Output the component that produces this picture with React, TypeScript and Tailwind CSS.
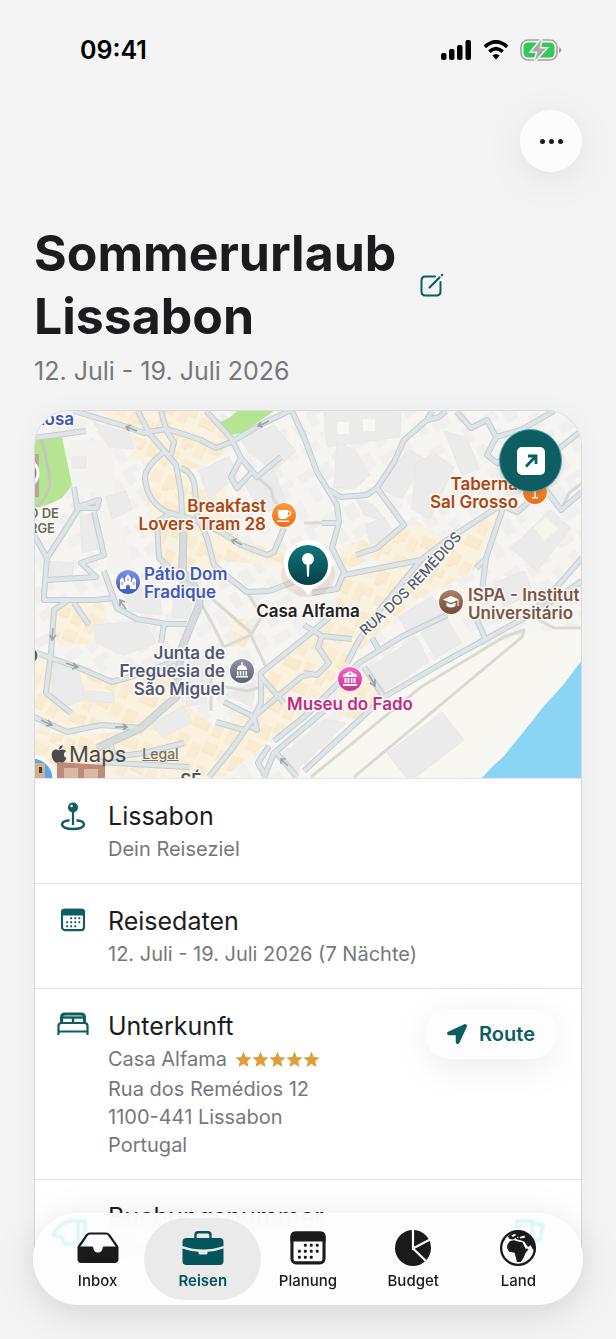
import type { ReactNode } from "react";
import { FaApple, FaLocationArrow } from "react-icons/fa";

const streets = [
  "M40 0 L90 15 L110 22 L120 20 L133 18 L152 24 L167 29 L182 37 L197 31 L230 12 L255 0",
  "M0 27 L52 20",
  "M104 0 L115 22 L128 37 L142 54 L147 81 L148 104 L150 160",
  "M127 0 L133 21 L140 31 L137 44",
  "M172 0 L197 27 L207 47 L223 66 L247 46",
  "M207 47 L197 66 L203 77 L218 61",
  "M130 41 Q112 55 111 66 Q112 90 133 101 L160 109 L187 121 L207 134 L233 144 L240 141 L250 117",
  "M147 57 Q160 62 161 78 L163 104 L173 127 L180 154 L200 171 L213 181 L235 180 L262 170",
  "M137 102 L123 111 L125 147 L150 171 L166 184",
  "M10 184 L13 147 L30 121 L45 97 L63 97 L65 89 L43 96 L40 76",
  "M60 101 L70 144 L47 152 L62 166 L12 169",
  "M0 124 L13 147",
  "M258 0 L270 26 L283 61 L303 94 L305 111 L298 137 L310 161 L303 178 L278 182",
  "M398 0 L393 9 L370 29 L360 51 L343 77 L333 84 L307 86 L295 79",
  "M393 9 L405 6 L412 0",
  "M343 77 L370 114 L343 137 L322 144",
  "M310 164 L387 149 L410 131 L467 94 L483 101 L503 84",
  "M313 252 L325 229 L345 200 L387 149",
  "M423 1 L437 17 L453 9 L462 26 L453 44 L463 52 L480 40",
  "M462 26 L487 19 L513 4 L520 0",
  "M548 19 L517 44 L500 60",
  "M503 67 L527 99 L548 81",
  "M470 94 L452 147 L448 180",
  "M453 147 L442 157",
  "M548 147 L527 171 L500 200",
  "M10 179 L10 189 L60 189 L80 187",
  "M70 160 L83 197 L103 208 L133 213 L153 213",
  "M130 213 L127 232",
  "M33 190 L20 199 L17 242 L12 282 L37 302",
  "M40 192 L55 214",
  "M0 241 L43 256 L78 271 L110 262 L140 250",
  "M0 306 L33 321 L67 314 L107 317",
  "M77 334 L80 346 L110 342 L150 332",
  "M63 350 L80 352 L155 356",
  "M175 366 L197 339 L220 306 L227 292 L227 262 L277 222 L300 202",
  "M182 311 L210 319",
  "M190 291 L220 306 L223 319 L217 316",
  "M227 266 L250 292",
  "M222 304 L267 266 L280 262",
  "M290 300 L240 342 L230 366",
  "M235 335 L224 352 L232 366",
  "M240 339 L263 366",
  "M270 360 L350 286 L410 251 L463 222 L503 200 L548 170",
  "M240 330 L270 306 L325 252 L367 226 L413 204",
  "M330 256 L350 286",
  "M338 227 L345 239",
  "M443 209 L452 229",
  "M270 214 L288 225 L318 228",
  "M288 225 L284 236 L295 252 L283 264 L270 262",
  "M288 112 L303 112",
];

const mainStreets = [
  "M150 112 L148 160 Q168 180 165 195 L157 214 L147 239 L142 286 L107 317 L63 337",
];

const footpaths = [
  "M277 366 L387 276 L470 226 L490 219 L488 226 L320 366",
  "M503 208 L520 217 L548 217",
  "M223 66 L237 78 L240 90 L250 97",
  "M548 72 L535 82 L528 97",
  "M167 192 L180 216 L190 236",
  "M176 186 L215 220 L232 256",
  "M190 236 L217 224 L228 205 L213 181",
  "M177 256 L177 300",
  "M187 275 L213 280 L227 276",
  "M270 112 L288 112",
];

const warmBlocks = [
  "M65 0 L172 0 L200 34 L180 50 L150 60 L165 78 L190 75 L205 130 L250 140 L250 155 L190 150 L160 175 L125 155 L118 110 L108 75 L112 50 L93 48 L105 32 L80 12Z",
  "M12 200 L40 190 L75 195 L60 232 L25 235Z",
  "M0 243 L43 258 L78 273 L140 262 L140 286 L107 317 L67 313 L33 321 L0 306Z",
  "M0 318 L33 324 L107 320 L150 292 L180 315 L222 300 L228 262 L300 200 L310 164 L387 149 L410 131 L467 96 L440 160 L380 190 L325 240 L315 255 L300 280 L190 366 L0 366Z",
  "M298 140 L330 128 L345 145 L310 160Z",
  "M310 262 L328 258 L348 288 L318 310 L300 300Z",
  "M195 212 L212 206 L222 226 L204 240Z",
  "M335 135 L356 120 L385 112 L410 128 L390 148 L345 156Z",
];

const greyBlocks = [
  "M60 12 L95 22 L100 38 L75 36Z",
  "M38 46 L52 46 L52 57 L38 57Z",
  "M165 60 L195 45 L203 66 L175 88Z",
  "M207 28 L240 14 L262 40 L240 60 L215 42Z",
  "M210 72 L240 60 L252 92 L228 104Z",
  "M72 86 L92 80 L98 98 L78 108Z",
  "M46 106 L58 102 L64 138 L48 142Z",
  "M16 150 L40 152 L38 166 L16 166Z",
  "M140 178 L160 182 L155 208 L138 206Z",
  "M85 172 L125 178 L128 204 L96 200Z",
  "M60 214 L110 210 L122 232 L90 244 L62 232Z",
  "M20 250 L45 262 L52 288 L30 296 L18 286Z",
  "M52 280 L80 282 L80 292 L54 290Z",
  "M118 312 L150 295 L158 312 L128 326Z",
  "M155 246 L176 250 L172 292 L152 296Z",
  "M192 284 L222 270 L218 296Z",
  "M290 1 L367 1 L366 26 L293 36Z",
  "M358 57 L375 38 L390 48 L368 88 L350 80Z",
  "M382 52 L400 42 L420 56 L396 108 L378 98Z",
  "M332 114 L350 106 L360 122 L336 134Z",
  "M303 30 L322 40 L336 64 L320 78 L300 76Z",
  "M465 60 L482 50 L500 62 L500 80 L474 84Z",
  "M477 137 L517 99 L537 117 L503 160Z",
  "M410 20 L432 26 L446 58 L428 64Z",
  "M364 206 L398 186 L410 200 L374 222Z",
  "M335 257 L383 226 L395 251 L350 280Z",
  "M387 222 L413 207 L427 232 L402 247Z",
  "M460 172 L490 160 L500 182 L470 196Z",
  "M353 342 L408 301 L430 329 L382 366 L372 366Z",
  "M248 345 L290 308 L312 312 L262 360Z",
  "M322 88 L340 94 L352 110 L330 104Z",
];

type Place = {
  lines: string[];
  x: number;
  y: number;
  anchor: "start" | "middle" | "end";
  color: string;
};

const places: Place[] = [
  { lines: ["Rosa"], x: 40, y: 14, anchor: "end", color: "#3f55b8" },
  { lines: ["Breakfast", "Lovers Tram 28"], x: 232, y: 101, anchor: "end", color: "#ae4510" },
  { lines: ["Pátio Dom", "Fradique"], x: 110, y: 169, anchor: "start", color: "#4059c0" },
  { lines: ["Casa Alfama"], x: 274, y: 206, anchor: "middle", color: "#222222" },
  { lines: ["Junta de", "Freguesia de", "São Miguel"], x: 191, y: 248, anchor: "end", color: "#505874" },
  { lines: ["Museu do Fado"], x: 316, y: 299, anchor: "middle", color: "#c02c84" },
  { lines: ["ISPA - Institut", "Universitário"], x: 434, y: 190, anchor: "start", color: "#7d5546" },
  { lines: ["Taberna", "Sal Grosso"], x: 484, y: 79, anchor: "end", color: "#ae4510" },
  { lines: ["O"], x: 4, y: 251, anchor: "end", color: "#555555" },
  { lines: ["SÉ"], x: 157, y: 375, anchor: "middle", color: "#555555" },
];

function Poi({ x, y, color, children }: { x: number; y: number; color: string; children?: ReactNode }) {
  return (
    <g transform={`translate(${x} ${y})`}>
      <circle r="13" fill="#fff" opacity="0.9" />
      <circle r="12" fill={color} />
      {children}
    </g>
  );
}

function MapView() {
  return (
    <svg
      viewBox="0 0 548 367"
      preserveAspectRatio="xMidYMid slice"
      className="block h-[367px] w-full"
      role="img"
      aria-label="Karte von Lissabon"
    >
      <defs>
        <pattern id="warm" width="58" height="46" patternUnits="userSpaceOnUse" patternTransform="rotate(24)">
          <rect width="58" height="46" fill="#faf1de" />
          <path d="M1 1 H15 V12 H1Z M32 3 H44 V15 H38 V19 H32Z M3 26 H13 V40 H3Z M40 28 H56 V38 H40Z" fill="#f9ead0" />
          <path d="M17 3 H28 V16 H17Z M18 24 H34 V33 H26 V43 H18Z M47 8 H56 V23 H47Z" fill="#faecd4" />
          <path d="M1 12 H15 M32 19 H38 V15 H44 M26 43 V33 H34 V24 M3 40 H13 M40 38 H56 V28 M56 8 V23" stroke="#ece0c8" strokeWidth="0.7" fill="none" />
        </pattern>
        <pattern id="pale" width="62" height="48" patternUnits="userSpaceOnUse" patternTransform="rotate(-32)">
          <rect width="62" height="48" fill="#f6f5f1" />
          <path d="M2 3 H18 V12 H2Z M24 6 H36 V22 H24Z M42 2 H58 V9 H50 V18 H42Z" fill="#f0efed" />
          <path d="M4 20 H14 V36 H4Z M20 30 H38 V40 H20Z M44 26 H54 V44 H44Z" fill="#f1f0ee" />
        </pattern>
        <linearGradient id="marker" x1="0" y1="0" x2="0" y2="1">
          <stop offset="0" stopColor="#0f777a" />
          <stop offset="1" stopColor="#083f45" />
        </linearGradient>
        <linearGradient id="orange" x1="0" y1="0" x2="0" y2="1">
          <stop offset="0" stopColor="#fb9d3c" />
          <stop offset="1" stopColor="#f26a16" />
        </linearGradient>
        <linearGradient id="pink" x1="0" y1="0" x2="0" y2="1">
          <stop offset="0" stopColor="#f765c8" />
          <stop offset="1" stopColor="#cf2c90" />
        </linearGradient>
        <linearGradient id="blue" x1="0" y1="0" x2="0" y2="1">
          <stop offset="0" stopColor="#7a92ea" />
          <stop offset="1" stopColor="#4058c4" />
        </linearGradient>
        <linearGradient id="slate" x1="0" y1="0" x2="0" y2="1">
          <stop offset="0" stopColor="#9095a6" />
          <stop offset="1" stopColor="#5c6178" />
        </linearGradient>
        <linearGradient id="brown" x1="0" y1="0" x2="0" y2="1">
          <stop offset="0" stopColor="#b08264" />
          <stop offset="1" stopColor="#6f4a3a" />
        </linearGradient>
        <path id="rua" d="M331 225 Q384 180 440 112" />
      </defs>

      <rect width="548" height="367" fill="url(#pale)" />
      <path d="M430 240 L495 222 L548 216 V366 H260 L350 290Z" fill="#f8f7f2" />
      <path d="M35 30 L70 30 Q84 45 80 80 L100 160 L75 165 L60 80 L38 74Z" fill="#f4f3f0" />
      {warmBlocks.map((d) => (
        <path key={d} d={d} fill="url(#warm)" />
      ))}
      {greyBlocks.map((d) => (
        <path key={d} d={d} fill="#ecebeb" stroke="#e4e3e1" strokeWidth="0.6" />
      ))}
      <rect x="303" y="11" width="12" height="12" fill="#f8f7f2" />
      <rect x="329" y="8" width="12" height="12" fill="#f8f7f2" />
      <path d="M500 116 L512 106 L524 118 L510 130Z" fill="#f6f5f0" />

      {/* Parks */}
      <path d="M0 28 L28 26 L38 74 L28 87 L18 92 L0 98Z" fill="#b5e592" />
      <path d="M203 0 L240 0 L230 7 L220 14 L213 21 L197 24 L184 12 L195 7Z" fill="#b5e592" />
      <path d="M7 28 Q14 50 16 72 Q12 92 0 96" fill="none" stroke="#c6c6bc" strokeWidth="3" />

      {/* Tejo */}
      <path d="M548 249 L530 273 L510 295 L495 314 L470 345 L457 357 L448 367 L548 367Z" fill="#8bd5f4" />

      {footpaths.map((d) => (
        <path key={d} d={d} fill="none" stroke="#d9dad4" strokeWidth="3" strokeLinejoin="round" />
      ))}
      {streets.map((d) => (
        <path key={d} d={d} fill="none" stroke="#c3cccf" strokeWidth="6" strokeLinejoin="round" />
      ))}
      {mainStreets.map((d) => (
        <path key={d} d={d} fill="none" stroke="#c6cbcc" strokeWidth="8" strokeLinejoin="round" />
      ))}
      {streets.map((d) => (
        <path key={d} d={d} fill="none" stroke="#dde5e8" strokeWidth="4" strokeLinejoin="round" />
      ))}
      {mainStreets.map((d) => (
        <path key={d} d={d} fill="none" stroke="#d6dbdd" strokeWidth="6" strokeLinejoin="round" />
      ))}

      {/* One-way arrows */}
      <g stroke="#9aa3a8" strokeWidth="1.6" fill="none">
        <path d="M103 20 L93 16 M97 14 L92 16 L95 20" />
        <path d="M235 10 L225 15 M227 11 L224 15 L229 16" />
        <path d="M208 134 L199 129 M203 128 L198 129 L200 133" />
        <path d="M32 252 L43 256 M39 252 L44 256 L38 258" />
        <path d="M81 316 L92 316 M89 313 L93 316 L89 319" />
        <path d="M7 309 L17 314 M14 309 L18 314 L12 315" />
        <path d="M92 198 L86 190 M86 195 L86 189 L91 191" />
        <path d="M18 228 L19 217 M16 224 L18 229 L22 224" />
        <path d="M335 264 L341 274 M341 268 L341 275 L336 272" />
        <path d="M254 355 L247 348 M247 353 L247 348 L252 348" />
      </g>

      {/* Landmarks */}
      <path d="M0 43 H5 V86 H0Z" fill="#b9a892" />
      <circle cx="-10" cy="62" r="14" fill="#8b8069" stroke="#fff" strokeWidth="3" />
      <path d="M23 351 L71 354 L71 367 L23 367Z" fill="#bd8a7c" />
      <path d="M30 357 h14 v10 h-14z M50 358 h14 v9 h-14z" fill="#d9b8a4" />
      <circle cx="-2" cy="368" r="22" fill="#5fa4ee" stroke="#fff" strokeWidth="3" />
      <path d="M0 352 h11 v15 h-11z" fill="#cdb48d" />
      <path d="M5 356 h3 v6 h-3z" fill="#4a4034" />

      <Poi x={250} y={104} color="url(#orange)">
        <path d="M-6 -5 H4 V0 Q4 4 0 4 H-2 Q-6 4 -6 0Z M-7 5.5 H5 V7 H-7Z" fill="#fff" />
        <path d="M4 -3.5 H6 Q7 -3 6.500 -1 Q6 1 3.500 1" fill="none" stroke="#fff" strokeWidth="1.300" />
      </Poi>
      <Poi x={94} y={171} color="url(#blue)">
        <path d="M-8 7 V-2 L-6 -5 L-4 -2 V0 H-3 V-4 L0 -8 L3 -4 V0 H4 V-2 L6 -5 L8 -2 V7 H2 V4 Q0 1 -2 4 V7Z" fill="#fff" />
        <path d="M-6 0 V3 M6 0 V3 M0 -4 V-1" stroke="#5a72d4" strokeWidth="1" />
      </Poi>
      <Poi x={208} y={260} color="url(#slate)">
        <path d="M-5 -1 Q-5 -6 0 -6 Q5 -6 5 -1Z M-0.7 -9 H0.7 V-5 H-0.7Z M-6 5 H6 V6.500 H-6Z M-5 0 H-3.500 V4.500 H-5Z M-2.200 0 H-0.7 V4.500 H-2.200Z M0.7 0 H2.200 V4.500 H0.7Z M3.500 0 H5 V4.500 H3.500Z" fill="#fff" />
      </Poi>
      <Poi x={316} y={268} color="url(#pink)">
        <path d="M0 -8 L7 -4 V-2 H-7 V-4Z M-5.500 -1 H-3.500 V4 H-5.500Z M-2.500 -1 H-0.7 V4 H-2.500Z M0.7 -1 H2.500 V4 H0.7Z M3.500 -1 H5.500 V4 H3.500Z M-7 5 H7 V7 H-7Z" fill="#fff" />
        <circle cy="-5" r="1" fill="#e44cb0" />
      </Poi>
      <Poi x={417} y={191} color="url(#brown)">
        <path d="M0 -6 L8 -2.500 L0 1 L-8 -2.500Z M-4.500 0.500 L0 2.500 L4.500 0.500 V4 Q0 7 -4.500 4Z M6.500 -2 H7.500 V4 H6.500Z" fill="#fff" />
      </Poi>
      <Poi x={501} y={81} color="url(#orange)">
        <path d="M-3 5 H3 V6.500 H-3Z M-0.8 -3 H0.8 V5 H-0.8Z" fill="#fff" />
      </Poi>

      <g
        className="[paint-order:stroke]"
        fontFamily="Inter, sans-serif"
        fontSize="17"
        fontWeight="600"
        stroke="#fbfaf6"
        strokeWidth="3"
        strokeLinejoin="round"
      >
        {places.map((place) => (
          <text key={place.lines[0]} x={place.x} y={place.y} textAnchor={place.anchor} fill={place.color}>
            {place.lines.map((line, i) => (
              <tspan key={line} x={place.x} y={place.y + i * 18}>
                {line}
              </tspan>
            ))}
          </text>
        ))}
        <g fontSize="13" fontWeight="600" fill="#6b6a62" textAnchor="end">
          <text x="25" y="107">O DE</text>
          <text x="21" y="122">ORGE</text>
        </g>
        <text fontSize="14" fontWeight="500" fill="#545c6e">
          <textPath href="#rua">RUA DOS REMÉDIOS</textPath>
        </text>
      </g>

      {/* Pin of the accommodation */}
      <g transform="translate(274 154)">
        <ellipse cy="10" rx="27" ry="22" fill="#a65c4a" opacity="0.12" />
        <path d="M0 30 L-7 22 A24 24 0 1 1 7 22Z" fill="#fff" />
        <circle r="20" fill="url(#marker)" />
        <circle cy="-6" r="6" fill="#fff" />
        <path d="M-1.500 -2 H1.500 L1 11 Q0 13 -1 11Z" fill="#fff" />
      </g>
    </svg>
  );
}

function StatusBar() {
  return (
    <div className="flex h-8 items-center justify-between pr-[54px] pl-20">
      <span className="text-[25px] leading-8 font-semibold text-black">09:41</span>
      <div className="flex items-center gap-[11px]">
        <svg width="31" height="20" viewBox="0 0 31 20" aria-hidden="true">
          <rect x="0" y="13" width="5.5" height="7" rx="2" />
          <rect x="8" y="9" width="5.5" height="11" rx="2" />
          <rect x="16" y="5" width="5.5" height="15" rx="2" />
          <rect x="24.500" y="0" width="5.5" height="20" rx="2" />
        </svg>
        <svg width="26" height="20" viewBox="0 0 26 20" aria-hidden="true">
          <path d="M1.800 6.800 Q13 -3.200 24.200 6.800" fill="none" stroke="#000" strokeWidth="3.600" />
          <path d="M6.300 11.600 Q13 5.600 19.700 11.600" fill="none" stroke="#000" strokeWidth="3.600" />
          <path d="M13 19.800 L9.400 15.600 Q13 12.400 16.600 15.600Z" />
        </svg>
        <svg width="42" height="24" viewBox="0 0 42 24" aria-hidden="true">
          <rect x="1" y="2" width="36" height="20" rx="7" fill="none" stroke="#a3a3a3" strokeWidth="1.600" />
          <rect x="3.500" y="4.500" width="31" height="15" rx="4.500" fill="#34c759" />
          <path d="M39 9 Q41.500 10 41.500 12 Q41.500 14 39 15Z" fill="#a3a3a3" />
          <path
            d="M21.500 1.500 L11.500 13.500 H17.500 L15 22.500 L26 10.500 H19.500Z"
            fill="#a9a9a9"
            stroke="#f4f4f4"
            strokeWidth="3"
            className="[paint-order:stroke]"
          />
        </svg>
      </div>
    </div>
  );
}

function PinIcon() {
  return (
    <svg width="32" height="36" viewBox="0 0 32 36" fill="none" stroke="currentColor" aria-hidden="true">
      <circle cx="16" cy="10.500" r="5" fill="currentColor" stroke="none" />
      <circle cx="14.600" cy="9" r="1.300" fill="#fff" stroke="none" />
      <path d="M16 14 V28" strokeWidth="2.200" />
      <path d="M12.500 23.200 Q5 24 5 27.500 Q5.500 31.800 16 32 Q26.500 31.800 27 27.500 Q27 24 19.500 23.200" strokeWidth="2.400" />
    </svg>
  );
}

function CalendarIcon({ size }: { size: number }) {
  return (
    <svg width={size} height={size} viewBox="0 0 32 32" aria-hidden="true">
      <rect x="2.500" y="3.500" width="27" height="25" rx="3.500" fill="none" stroke="currentColor" strokeWidth="2.600" />
      <path d="M1.200 10.500 V6.200 Q1.200 2.200 5.200 2.200 H26.800 Q30.800 2.200 30.800 6.200 V10.500Z" fill="currentColor" />
      <g fill="currentColor">
        {[12, 17, 22].map((y, row) =>
          [7.5, 12.5, 17.5, 22.5].map((x, col) =>
            (row === 0 && col === 0) || (row === 2 && col === 3) ? null : (
              <rect key={`${x}-${y}`} x={x} y={y + 0.5} width="2.500" height="2.500" rx="0.8" />
            ),
          ),
        )}
      </g>
    </svg>
  );
}

function BedIcon() {
  return (
    <svg width="32" height="32" viewBox="0 0 32 32" fill="none" stroke="currentColor" strokeWidth="2.200" aria-hidden="true">
      <path d="M4.500 14 V8.500 Q4.500 5 8 5 H24 Q27.500 5 27.500 8.500 V14" strokeWidth="3" />
      <path d="M16 8 V13.500" strokeWidth="2.400" />
      <path d="M6 8.500 H26" strokeWidth="2.400" />
      <path d="M1.500 26 V17 Q1.500 14 4.500 14 H27.500 Q30.500 14 30.500 17 V26 M1.500 22.500 H30.500" />
    </svg>
  );
}

function Stars() {
  return (
    <span className="flex" role="img" aria-label="5 Sterne">
      {[1, 2, 3, 4, 5].map((n) => (
        <svg key={n} width="17" height="17" viewBox="0 0 24 24" fill="#dc9f3c" aria-hidden="true">
          <path d="M12 0.800 L15.200 8.400 L23.500 9.100 L17.200 14.500 L19.100 22.600 L12 18.300 L4.900 22.600 L6.800 14.500 L0.500 9.100 L8.800 8.400Z" />
        </svg>
      ))}
    </span>
  );
}

function Row({ icon, title, action, children }: { icon?: ReactNode; title: string; action?: ReactNode; children: ReactNode }) {
  return (
    <section className="flex border-b border-[#e6e6e9] pt-5 pb-5 last:border-b-0">
      <div className="flex h-8 w-[73px] shrink-0 items-center justify-center pl-0.5 text-[#0d5d62]">{icon}</div>
      <div className="min-w-0 flex-1">
        <h2 className="text-[25px] leading-[34px] text-[#1c1c1e]">{title}</h2>
        <div className="mt-0.5 text-[20px] leading-7 text-[#77777b]">{children}</div>
      </div>
      {action}
    </section>
  );
}

const tabs = [
  {
    label: "Inbox",
    active: false,
    icon: (
      <svg width="42" height="38" viewBox="0 0 42 38" aria-hidden="true">
        <path d="M1.600 18 L10 6 Q11 4.500 13 4.500 H29 Q31 4.500 32 6 L40.400 18" fill="none" stroke="currentColor" strokeWidth="2.200" />
        <path d="M0.500 17.500 H15 Q16.500 17.500 16.500 19.500 Q17 23.500 21 23.500 Q25 23.500 25.500 19.500 Q25.500 17.500 27 17.500 H41.500 V30 Q41.500 34 37.500 34 H4.500 Q0.500 34 0.500 30Z" fill="currentColor" />
      </svg>
    ),
  },
  {
    label: "Reisen",
    active: true,
    icon: (
      <svg width="42" height="38" viewBox="0 0 42 38" aria-hidden="true">
        <path d="M13.500 9.500 V6 Q13.500 3.200 16 3.200 H26 Q28.500 3.200 28.500 6 V9.500" fill="none" stroke="currentColor" strokeWidth="2.400" />
        <path d="M0.500 17 V13 Q0.500 9 4.500 9 H37.500 Q41.500 9 41.500 13 V17 Q31 20.500 21 20.500 Q11 20.500 0.500 17Z" fill="currentColor" />
        <path d="M0.500 19.500 Q8 22.300 16.500 22.800 V24 Q16.500 25.500 18 25.500 H24 Q25.500 25.500 25.500 24 V22.800 Q34 22.300 41.500 19.500 V32 Q41.500 36 37.500 36 H4.500 Q0.500 36 0.500 32Z" fill="currentColor" />
      </svg>
    ),
  },
  { label: "Planung", active: false, icon: <CalendarIcon size={38} /> },
  {
    label: "Budget",
    active: false,
    icon: (
      <svg width="38" height="38" viewBox="0 0 38 38" aria-hidden="true">
        <circle cx="19" cy="19" r="18" fill="currentColor" />
        <path d="M19 0 V19.500 L37 10 M19 19.500 L34 34" fill="none" stroke="#fcfcfc" strokeWidth="2.200" />
      </svg>
    ),
  },
  {
    label: "Land",
    active: false,
    icon: (
      <svg width="38" height="38" viewBox="0 0 36 36" aria-hidden="true">
        <circle cx="18" cy="18" r="16" fill="none" stroke="currentColor" strokeWidth="2.200" />
        <path d="M8 14.700 L10.500 11.300 L14 10.600 L19 12 L22.300 12.500 L25 18.500 L28 19 L25 23 L23 28 L20.700 31.300 L17 31.300 L16 27 L14.700 22.500 L9.500 21.600 L7.600 18Z" fill="currentColor" />
        <path d="M8.500 7 Q13 2 19 2 Q30 3 34 14 L34.500 21 L31.500 18.500 L30 15.500 L27.500 17 L24 12 L20.500 10.600 L17 10 L15.500 8.500 L13.500 10 L10 9.500Z" fill="currentColor" />
        <path d="M19.500 7.500 L24 6.200 L25 8 L20.500 9Z M11.500 6.500 L14 4.800 L16.500 5.500 L13.500 7.500Z M17 8 L18 6.800 L18.500 9Z" fill="#fcfcfc" />
      </svg>
    ),
  },
];

function TabBar() {
  return (
    <nav className="fixed inset-x-[33px] bottom-[34px] rounded-full border border-white bg-[#fdfdfd]/95 px-[11px] py-1 shadow-[0_8px_40px_rgba(0,0,0,0.13)] backdrop-blur-sm">
      {/* Tinted reflections of the row underneath */}
      <svg className="absolute top-1 left-4 blur-[1px]" width="40" height="32" viewBox="0 0 40 32" fill="none" stroke="#d6f5f5" strokeWidth="3" aria-hidden="true">
        <path d="M3 17 Q10 3 24 3 H35 V26 H14 L12 19Z M28 4 V24" />
      </svg>
      <svg className="absolute top-1 right-9 blur-[1px]" width="32" height="28" viewBox="0 0 32 28" fill="none" stroke="#d6f5f5" strokeWidth="3" aria-hidden="true">
        <path d="M3 3 H18 V22 H3Z M20 5 L29 7 L26 22 H20" />
      </svg>
      <ul className="relative grid grid-cols-5">
        {tabs.map((tab) => (
          <li key={tab.label} className="-mx-1.5">
            <a
              href={`#${tab.label.toLowerCase()}`}
              aria-current={tab.active ? "page" : undefined}
              className={
                tab.active
                  ? "flex h-[82px] flex-col items-center rounded-full bg-[#eaeaea] pt-[11px] text-[#04555b]"
                  : "flex h-[82px] flex-col items-center rounded-full pt-[11px] text-[#1a1a1a]"
              }
            >
              {tab.icon}
              <span className={tab.active ? "mt-1 text-[15px] leading-5 font-semibold" : "mt-1 text-[15px] leading-5 font-medium"}>
                {tab.label}
              </span>
            </a>
          </li>
        ))}
      </ul>
    </nav>
  );
}

export default function App() {
  return (
    <div className="min-h-screen bg-[#f4f4f4] pt-[34px] pb-12 font-['Inter',sans-serif]">
      <StatusBar />

      <main className="px-[34px] pt-11">
        <div className="flex justify-end">
          <button
            type="button"
            aria-label="Mehr"
            className="flex size-[62px] items-center justify-center gap-1 rounded-full border border-white bg-[#fcfcfc] shadow-[0_8px_40px_rgba(0,0,0,0.08)]"
          >
            <span className="size-[5px] rounded-full bg-[#1c1c1e]" />
            <span className="size-[5px] rounded-full bg-[#1c1c1e]" />
            <span className="size-[5px] rounded-full bg-[#1c1c1e]" />
          </button>
        </div>

        <header className="mt-[50px]">
          <div className="flex items-center gap-6">
            <h1 className="text-[50px] leading-[63px] font-bold text-[#1c1c1e]">
              Sommerurlaub
              <br />
              Lissabon
            </h1>
            <button type="button" aria-label="Titel bearbeiten" className="text-[#0d5d62]">
              <svg width="24" height="24" viewBox="0 0 24 24" fill="none" stroke="currentColor" strokeWidth="2" strokeLinecap="round" aria-hidden="true">
                <path d="M15 3.500 H5.500 Q1.500 3.500 1.500 7.500 V18.500 Q1.500 22.500 5.500 22.500 H16.500 Q20.500 22.500 20.500 18.500 V9" />
                <path d="M9.500 14.500 L19.500 4.500 M21.800 2.200 L22.200 1.800" strokeWidth="2.200" />
              </svg>
            </button>
          </div>
          <p className="mt-1.5 text-[25px] leading-[34px] text-[#77777b]">12. Juli - 19. Juli 2026</p>
        </header>

        <div className="mt-[22px] rounded-[36px] border border-[#dadade] bg-white shadow-[0_0_24px_rgba(0,0,0,0.04)]">
          <div className="relative overflow-hidden rounded-t-[35px] border-b border-[#e6e6e9]">
            <MapView />
            <button
              type="button"
              aria-label="Karte öffnen"
              className="absolute top-[18px] right-[19px] flex size-[63px] items-center justify-center rounded-full border border-[#4fa3a5] bg-[#0d5d62] shadow-md"
            >
              <svg width="28" height="28" viewBox="0 0 28 28" aria-hidden="true">
                <rect width="28" height="28" rx="5" fill="#fff" />
                <path d="M9 19.500 L18.500 9.500 M11 9 H19 V17" fill="none" stroke="#0d5d62" strokeWidth="2.800" />
              </svg>
            </button>
            <div className="absolute bottom-2 left-[14px] flex items-center text-[#4b4b49]">
              <FaApple className="size-5" aria-hidden="true" />
              <span className="text-[22px] leading-8">Maps</span>
              <a href="#legal" className="ml-4 text-[14px] leading-5 font-medium text-[#77736b] underline">
                Legal
              </a>
            </div>
          </div>

          <Row icon={<PinIcon />} title="Lissabon">
            Dein Reiseziel
          </Row>
          <Row icon={<CalendarIcon size={26} />} title="Reisedaten">
            12. Juli - 19. Juli 2026 (7 Nächte)
          </Row>
          <Row
            icon={<BedIcon />}
            title="Unterkunft"
            action={
              <button
                type="button"
                className="mr-6 flex h-[50px] items-center gap-3 rounded-full bg-[#fdfdfd] px-[22px] text-[20px] font-semibold text-[#0d5d62] shadow-[0_8px_40px_rgba(0,0,0,0.08)]"
              >
                <FaLocationArrow className="size-5" aria-hidden="true" />
                Route
              </button>
            }
          >
            <p className="flex items-center gap-2">
              Casa Alfama <Stars />
            </p>
            <address className="mt-0.5 not-italic">
              Rua dos Remédios 12
              <br />
              1100-441 Lissabon
              <br />
              Portugal
            </address>
          </Row>
          <Row title="Buchungsnummer">LIS-2026</Row>
        </div>
      </main>

      <TabBar />
    </div>
  );
}
